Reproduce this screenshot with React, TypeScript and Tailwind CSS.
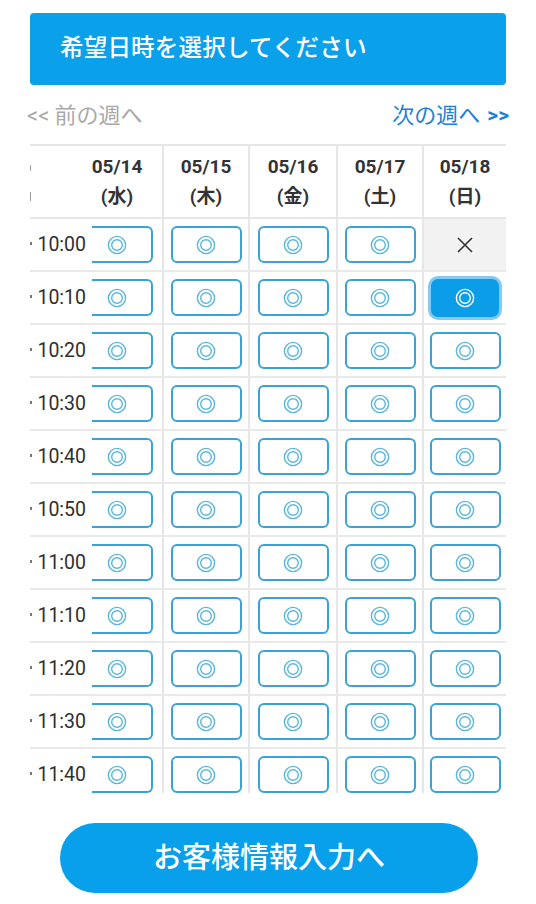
import React from "react";

const FONT = { fontFamily: 'Roboto, "Noto Sans CJK JP", sans-serif' };

const days = [
  { d: "05/14", w: "水" },
  { d: "05/15", w: "木" },
  { d: "05/16", w: "金" },
  { d: "05/17", w: "土" },
  { d: "05/18", w: "日" },
];
const times = ["10:00", "10:10", "10:20", "10:30", "10:40", "10:50", "11:00", "11:10", "11:20", "11:30", "11:40"];

function DoubleCircle({ color }: { color: string }) {
  return (
    <svg width="20" height="20" viewBox="0 0 20 20" fill="none">
      <circle cx="10" cy="10" r="8.6" stroke={color} strokeWidth="1.4" />
      <circle cx="10" cy="10" r="5.3" stroke={color} strokeWidth="1.4" />
    </svg>
  );
}

function Cross() {
  return (
    <svg width="18" height="18" viewBox="0 0 18 18">
      <path d="M2 2 L16 16 M16 2 L2 16" stroke="#333" strokeWidth="1.6" />
    </svg>
  );
}

function SlotButton({ selected }: { selected?: boolean }) {
  if (selected) {
    return (
      <div className="w-[68px] h-[38px] shrink-0 rounded-[7px] bg-[#0b9de7] shadow-[0_0_0_3px_#86c8f2] flex items-center justify-center">
        <DoubleCircle color="#ffffff" />
      </div>
    );
  }
  return (
    <div className="w-[71px] h-[37px] shrink-0 rounded-[6px] border-2 border-[#3aa2d6] bg-white flex items-center justify-center">
      <DoubleCircle color="#5ab6dc" />
    </div>
  );
}

export default function App() {
  return (
    <div className="w-[536px] h-[904px] bg-white px-[30px] pt-[13px] flex flex-col" style={FONT}>
      <div className="h-[72px] rounded-[4px] bg-[#0aa0ea] flex items-center pl-[30px]">
        <span className="text-white text-[23.5px] font-medium leading-none tracking-[0.2px]">希望日時を選択してください</span>
      </div>

      <div className="h-[59px] flex items-center justify-between -mx-[3px] pt-[2px]">
        <div className="flex items-center text-[#a9a9a9]">
          <span className="text-[22px] mr-[5px]">&lt;&lt;</span>
          <span className="text-[22px]">前の週へ</span>
        </div>
        <div className="flex items-center text-[#1d80d2]">
          <span className="text-[22px]">次の週へ</span>
          <span className="text-[21px] font-bold ml-[7px]">&gt;&gt;</span>
        </div>
      </div>

      <div className="h-[649px] overflow-hidden border-t-2 border-[#e6e6e6]">
        <div className="grid grid-cols-[62px_70px_86px_88px_86px_84px] h-[73px] border-b-2 border-[#e6e6e6]">
          <div className="relative bg-white">
            <span className="absolute left-[-1px] top-[19px] w-[2px] h-[6px] bg-[#9a9a9a] rounded-full" />
            <span className="absolute left-[-1px] top-[46px] w-[2px] h-[9px] bg-[#9a9a9a]" />
          </div>
          {days.map((day, i) => (
            <div
              key={day.d}
              className={`flex flex-col items-center justify-center text-[#333] font-bold text-[19px] leading-[30px] ${i === 0 ? "pr-[20px]" : "border-l-2 border-[#e6e6e6]"}`}
            >
              <span>{day.d}</span>
              <span>({day.w})</span>
            </div>
          ))}
        </div>

        {times.map((t, r) => (
          <div key={t} className="grid grid-cols-[62px_70px_86px_88px_86px_84px] h-[53px] border-b-2 border-[#e9e9e9]">
            <div className="relative bg-white flex items-center justify-end pr-[6px] text-[19.5px] text-[#2f2f2f]">
              <span className="absolute left-[0px] top-[23px] w-[2px] h-[3px] bg-[#777]" />
              {t}
            </div>
            <div className="overflow-hidden flex items-center justify-end pr-[9px]">
              <div className="w-[61px] h-[37px] shrink-0 rounded-r-[6px] border-2 border-l-0 border-[#3aa2d6] bg-white flex items-center justify-center pr-[9px]">
                <DoubleCircle color="#5ab6dc" />
              </div>
            </div>
            {[1, 2, 3, 4].map((c) => {
              const unavailable = c === 4 && r === 0;
              const selected = c === 4 && r === 1;
              if (unavailable) {
                return (
                  <div key={c} className="border-l-2 border-[#e6e6e6] bg-[#f2f2f2] flex items-center justify-center">
                    <Cross />
                  </div>
                );
              }
              return (
                <div key={c} className="border-l-2 border-[#e6e6e6] flex items-center justify-center">
                  <SlotButton selected={selected} />
                </div>
              );
            })}
          </div>
        ))}
      </div>

      <div className="flex justify-center mt-[30px] pl-[2px]">
        <div className="w-[418px] h-[70px] rounded-full bg-[#08a0ea] flex items-center justify-center">
          <span className="text-white text-[29px] font-medium leading-none">お客様情報入力へ</span>
        </div>
      </div>
    </div>
  );
}
